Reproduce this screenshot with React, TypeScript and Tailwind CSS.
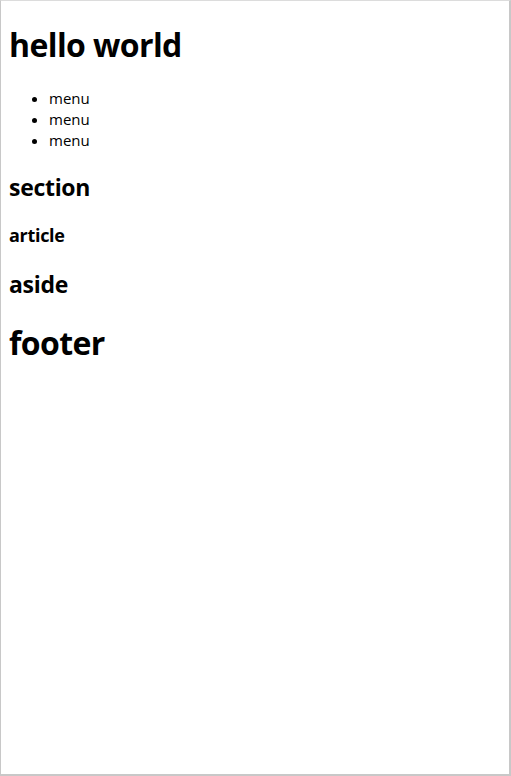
export default function App() {
  return (
    <div className="w-[511px] h-[776px] bg-white border-t border-l border-r-2 border-b-2 border-t-[#dcdcdc] border-l-[#c8c8c8] border-r-[#c8c8c8] border-b-[#c8c8c8] font-['Open_Sans',sans-serif] text-black">
      <div className="px-[8px] pt-[22px]">
        <header>
          <h1 className="text-[32px] font-bold leading-[43px] tracking-[-0.6px]">hello world</h1>
          <nav>
            <ul className="list-disc pl-[40px] mt-[22px] text-[15px] leading-[21px]">
              <li>menu</li>
              <li>menu</li>
              <li>menu</li>
            </ul>
          </nav>
        </header>
        <section className="mt-[20px]">
          <h2 className="text-[23px] font-bold leading-[32px] tracking-[-0.3px]">section</h2>
          <article className="mt-[20px]">
            <h3 className="text-[18px] font-bold leading-[25px] tracking-[-0.3px]">article</h3>
          </article>
        </section>
        <aside className="mt-[20px]">
          <h2 className="text-[23px] font-bold leading-[32px] tracking-[-0.3px]">aside</h2>
        </aside>
        <footer className="mt-[21px]">
          <h1 className="text-[32px] font-bold leading-[43px] tracking-[-0.6px]">footer</h1>
        </footer>
      </div>
    </div>
  );
}
